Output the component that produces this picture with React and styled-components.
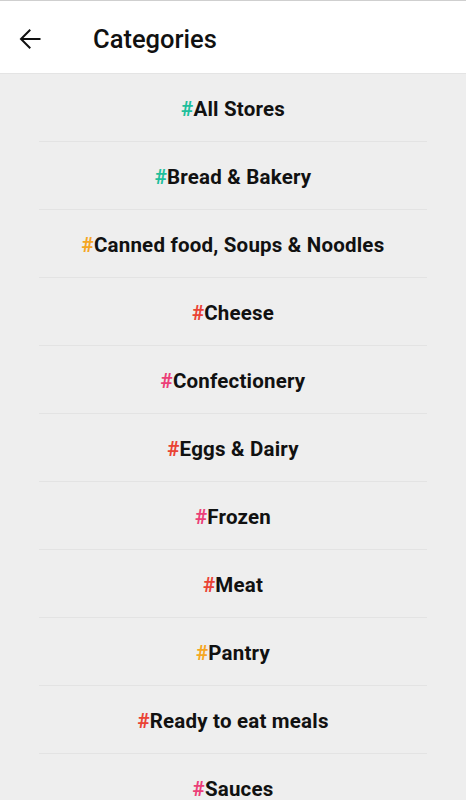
import styled, { createGlobalStyle } from 'styled-components';

const GlobalStyle = createGlobalStyle`
	html, body {
		margin: 0;
		padding: 0;
		background: #eeeeee;
		font-family: Roboto, 'Noto Sans', sans-serif;
	}
`;

const Screen = styled.div`
	width: 466px;
	height: 800px;
	overflow: hidden;
	background: #eeeeee;
`;

const Header = styled.header`
	height: 74px;
	box-sizing: border-box;
	border-top: 1px solid #cfcfcf;
	border-bottom: 1px solid #e4e4e4;
	background: #ffffff;
	display: flex;
	align-items: center;
	padding-left: 15px;
	padding-top: 3px;
`;

const BackButton = styled.button`
	width: 30px;
	height: 30px;
	padding: 0;
	border: none;
	background: none;
	display: flex;
	align-items: center;
	justify-content: center;
	margin-right: 48px;
`;

const Title = styled.h1`
	margin: 0;
	font-size: 25.5px;
	font-weight: 500;
	color: #111;
`;

const List = styled.ul`
	list-style: none;
	margin: 0;
	padding: 0 39px;
`;

const Row = styled.li`
	height: 68px;
	box-sizing: border-box;
	padding-top: 2px;
	display: flex;
	align-items: center;
	justify-content: center;
	border-bottom: 1px solid #e3e3e3;
	font-size: 20.5px;
	font-weight: 700;
	letter-spacing: 0.2px;
	color: #111;
`;

const Hash = styled.span`
	color: ${(p) => p.$color};
`;

const colors = {
	teal: '#1fbf9c',
	orange: '#f5a623',
	red: '#ea4335',
	pink: '#ec3f78',
};

const categories = [
	['All Stores', 'teal'],
	['Bread & Bakery', 'teal'],
	['Canned food, Soups & Noodles', 'orange'],
	['Cheese', 'red'],
	['Confectionery', 'pink'],
	['Eggs & Dairy', 'red'],
	['Frozen', 'pink'],
	['Meat', 'red'],
	['Pantry', 'orange'],
	['Ready to eat meals', 'red'],
	['Sauces', 'pink'],
];

const App = () => {
	return (
		<Screen>
			<GlobalStyle />
			<Header>
				<BackButton aria-label='Back'>
					<svg width='30' height='30' viewBox='0 0 24 24' fill='none' stroke='#111' strokeWidth='1.6' strokeLinejoin='miter'>
						<path d='M20.4 12H5.2' />
						<path d='M12.2 4.6L4.8 12l7.4 7.4' />
					</svg>
				</BackButton>
				<Title>Categories</Title>
			</Header>
			<List>
				{categories.map(([name, c]) => (
					<Row key={name}>
						<Hash $color={colors[c]}>#</Hash>
						{name}
					</Row>
				))}
			</List>
		</Screen>
	);
};

export default App;
